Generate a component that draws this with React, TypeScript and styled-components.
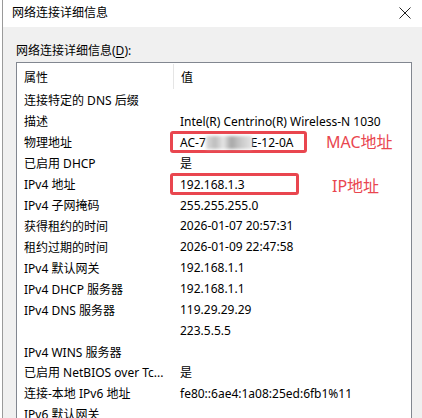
import React from 'react';
import styled, { createGlobalStyle } from 'styled-components';

const GlobalStyle = createGlobalStyle`
  html, body {
    margin: 0;
    padding: 0;
    background: #ffffff;
    overflow: hidden;
  }
  body {
    font-family: 'Noto Sans', 'Noto Sans CJK SC', sans-serif;
    font-size: 12px;
    color: #000;
  }
`;

interface DetailRow {
  name: string;
  value?: string;
  mark?: 'mac' | 'ip';
}

const rows: DetailRow[] = [
  { name: '连接特定的 DNS 后缀' },
  { name: '描述', value: 'Intel(R) Centrino(R) Wireless-N 1030' },
  { name: '物理地址', value: 'AC-7', mark: 'mac' },
  { name: '已启用 DHCP', value: '是' },
  { name: 'IPv4 地址', value: '192.168.1.3', mark: 'ip' },
  { name: 'IPv4 子网掩码', value: '255.255.255.0' },
  { name: '获得租约的时间', value: '2026-01-07 20:57:31' },
  { name: '租约过期的时间', value: '2026-01-09 22:47:58' },
  { name: 'IPv4 默认网关', value: '192.168.1.1' },
  { name: 'IPv4 DHCP 服务器', value: '192.168.1.1' },
  { name: 'IPv4 DNS 服务器', value: '119.29.29.29' },
  { name: '', value: '223.5.5.5' },
  { name: 'IPv4 WINS 服务器' },
  { name: '已启用 NetBIOS over Tc...', value: '是' },
  { name: '连接-本地 IPv6 地址', value: 'fe80::6ae4:1a08:25ed:6fb1%11' },
  { name: 'IPv6 默认网关' },
];

const Frame = styled.div`
  padding-left: 2px;
  background: #fff;
  height: 418px;
`;

const Window = styled.div`
  display: flex;
  flex-direction: column;
  height: 100%;
  border-left: 1px solid #9a9a9a;
`;

const TitleBar = styled.div`
  display: flex;
  align-items: center;
  justify-content: space-between;
  height: 27px;
  padding: 0 11px 0 9px;
  background: #ffffff;
  flex-shrink: 0;
`;

const Title = styled.span`
  font-size: 12px;
  color: #000;
  margin-top: -3px;
`;

const CloseIcon = styled.svg`
  width: 12px;
  height: 12px;
  margin-top: -2px;
`;

const Body = styled.div`
  flex: 1;
  background: #f0f0f0;
  padding: 15px 0 0 13px;
  overflow: hidden;
`;

const Label = styled.div`
  height: 20px;
  line-height: 18px;

  u {
    text-underline-offset: 2px;
  }
`;

const ListBox = styled.div`
  width: 394px;
  border: 1px solid #828790;
  border-bottom: none;
  background: #fff;
  height: 400px;
`;

const HeaderRow = styled.div`
  display: grid;
  grid-template-columns: 156px 1fr;
  grid-template-rows: 27px;
  align-items: center;
`;

const HeaderCell = styled.div<{ $divider?: boolean }>`
  height: 24px;
  display: flex;
  align-items: center;
  padding-left: 7px;
  border-left: ${(p) => (p.$divider ? '1px solid #e5e5e5' : 'none')};
  padding-top: 1px;
`;

const Row = styled.div`
  display: grid;
  grid-template-columns: 156px 1fr;
  grid-template-rows: 20.93px;
  align-items: center;
`;

const NameCell = styled.div`
  padding-left: 7px;
  white-space: nowrap;
  overflow: hidden;
`;

const ValueCell = styled.div`
  display: flex;
  align-items: center;
  padding-left: 7px;
  white-space: nowrap;
`;

const Highlight = styled.span<{ $width: number }>`
  display: inline-flex;
  align-items: center;
  box-sizing: border-box;
  width: ${(p) => p.$width}px;
  height: 22px;
  margin: 0 0 0 -10px;
  padding-left: 7px;
  border: 3px solid #e9464f;
  border-radius: 3px;
`;

const Blurred = styled.span`
  display: inline-block;
  width: 46px;
  height: 13px;
  margin: 0 -1px 0 0;
  background: linear-gradient(
    90deg,
    #dcdcdc 0%,
    #bdbdbd 20%,
    #e6e6e6 38%,
    #a6a6a6 55%,
    #c4c4c4 72%,
    #e4e4e4 100%
  );
  filter: blur(1.8px);
`;

const Note = styled.span<{ $gap: number; $shift: number }>`
  margin-left: ${(p) => p.$gap}px;
  margin-top: ${(p) => p.$shift}px;
  font-size: 16px;
  line-height: 16px;
  color: #e9464f;
`;

function renderValue(row: DetailRow) {
  if (row.mark === 'mac') {
    return (
      <>
        <Highlight $width={137}>
          AC-7<Blurred />E-12-0A
        </Highlight>
        <Note $gap={19} $shift={0}>MAC地址</Note>
      </>
    );
  }
  if (row.mark === 'ip') {
    return (
      <>
        <Highlight $width={129}>{row.value}</Highlight>
        <Note $gap={33} $shift={4}>IP地址</Note>
      </>
    );
  }
  return row.value;
}

export default function App() {
  return (
    <Frame>
      <GlobalStyle />
      <Window>
        <TitleBar>
          <Title>网络连接详细信息</Title>
          <CloseIcon viewBox="0 0 12 12">
            <path d="M0.5 0.5 L11.5 11.5 M11.5 0.5 L0.5 11.5" stroke="#222" strokeWidth="1" fill="none" />
          </CloseIcon>
        </TitleBar>
        <Body>
          <Label>
            网络连接详细信息(<u>D</u>):
          </Label>
          <ListBox>
            <HeaderRow>
              <HeaderCell>属性</HeaderCell>
              <HeaderCell $divider>值</HeaderCell>
            </HeaderRow>
            {rows.map((row, i) => (
              <Row key={i}>
                <NameCell>{row.name}</NameCell>
                <ValueCell>{renderValue(row)}</ValueCell>
              </Row>
            ))}
          </ListBox>
        </Body>
      </Window>
    </Frame>
  );
}
